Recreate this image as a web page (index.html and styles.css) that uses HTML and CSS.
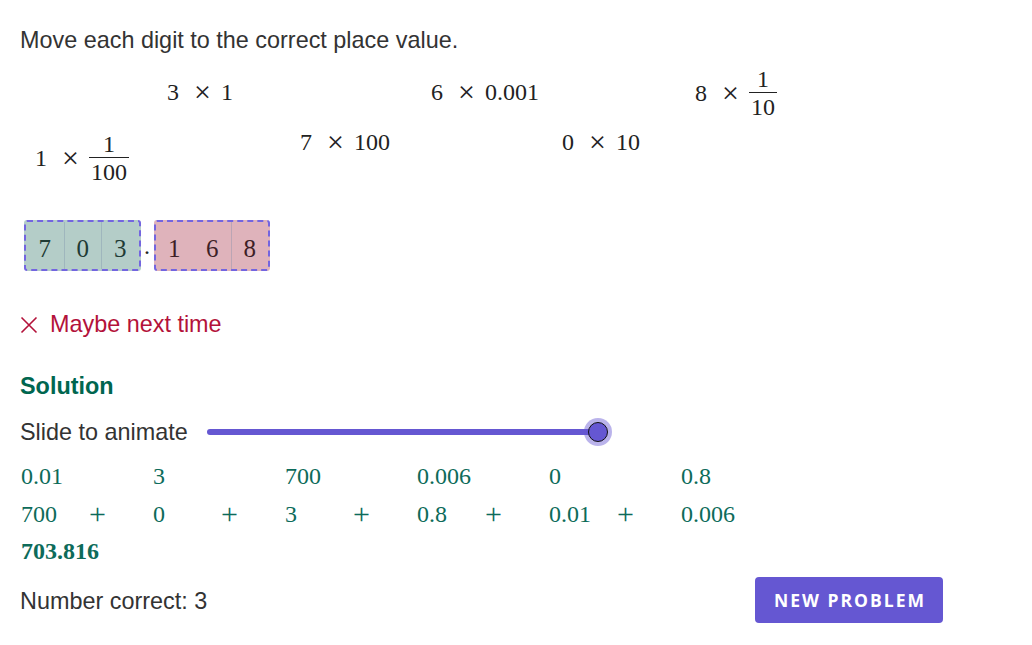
FILE: index.html
```html
<!DOCTYPE html>
<html lang="en">
<head>
<meta charset="utf-8">
<title>Place value</title>
<link rel="stylesheet" href="styles.css">
</head>
<body>
<main class="app">
  <p class="prompt">Move each digit to the correct place value.</p>

  <section class="canvas">
    <div class="term t-a"><span class="num">3</span><span class="op">×</span><span class="num">1</span></div>
    <div class="term t-b"><span class="num">6</span><span class="op">×</span><span class="num">0.001</span></div>
    <div class="term t-c"><span class="num">8</span><span class="op">×</span><span class="frac"><span class="fn">1</span><span class="fd">10</span></span></div>
    <div class="term t-d"><span class="num">1</span><span class="op">×</span><span class="frac"><span class="fn">1</span><span class="fd">100</span></span></div>
    <div class="term t-e"><span class="num">7</span><span class="op">×</span><span class="num">100</span></div>
    <div class="term t-f"><span class="num">0</span><span class="op">×</span><span class="num">10</span></div>

    <div class="pv-row">
      <div class="pv-group whole">
        <span class="cell">7</span><span class="cell">0</span><span class="cell">3</span>
      </div>
      <span class="point">.</span>
      <div class="pv-group frac-part">
        <span class="cell">1</span><span class="cell">6</span><span class="cell">8</span>
      </div>
    </div>
  </section>

  <p class="feedback">
    <svg class="x-icon" width="18" height="18" viewBox="0 0 18 18" aria-hidden="true">
      <path d="M1.5 1.5 L16.5 16.5 M16.5 1.5 L1.5 16.5" stroke="currentColor" stroke-width="1.6" fill="none"/>
    </svg>
    <span>Maybe next time</span>
  </p>

  <h2 class="solution-title">Solution</h2>

  <div class="slider-row">
    <span class="slide-label">Slide to animate</span>
    <div class="slider">
      <div class="track"></div>
      <div class="knob"></div>
    </div>
  </div>

  <div class="sol-row first">
    <span class="sol-cell">0.01</span>
    <span class="sol-cell">3</span>
    <span class="sol-cell">700</span>
    <span class="sol-cell">0.006</span>
    <span class="sol-cell">0</span>
    <span class="sol-cell">0.8</span>
  </div>
  <div class="sol-row">
    <span class="sol-cell"><span class="sv">700</span><span class="plus">+</span></span>
    <span class="sol-cell"><span class="sv">0</span><span class="plus">+</span></span>
    <span class="sol-cell"><span class="sv">3</span><span class="plus">+</span></span>
    <span class="sol-cell"><span class="sv">0.8</span><span class="plus">+</span></span>
    <span class="sol-cell"><span class="sv">0.01</span><span class="plus">+</span></span>
    <span class="sol-cell"><span class="sv">0.006</span></span>
  </div>
  <div class="sol-total">703.816</div>

  <div class="footer">
    <span class="score">Number correct: 3</span>
    <button class="new-btn" type="button">NEW PROBLEM</button>
  </div>
</main>
</body>
</html>
```

FILE: styles.css
```css
* { box-sizing: border-box; }

html, body {
  margin: 0;
  padding: 0;
  background: #ffffff;
}

body {
  font-family: "Liberation Sans", Arial, sans-serif;
  color: #333333;
}

.app {
  width: 943px;
  padding: 27px 0 0 20px;
}

.prompt {
  margin: 0;
  font-size: 23.4px;
  line-height: 26px;
}

.canvas {
  position: relative;
  margin-top: 7px;
  height: 211px;
  padding: 160px 0 0 4px;
}

.term {
  position: absolute;
  display: flex;
  align-items: center;
  font-family: "Liberation Serif", "Times New Roman", serif;
  font-size: 24px;
  line-height: 24px;
  color: #222222;
}

.op {
  font-size: 30px;
  line-height: 24px;
  margin: 0 10px 0 15px;
}

.frac {
  display: inline-flex;
  flex-direction: column;
  align-items: center;
}

.fn {
  display: block;
  margin-bottom: 1px;
}

.fd {
  display: block;
  border-top: 1.3px solid #222222;
  padding: 2px 2px 0;
}

.t-a { left: 147px; top: 20px; }
.t-b { left: 411px; top: 20px; }
.t-c { left: 675px; top: 7px; }
.t-d { left: 15px; top: 72px; }
.t-e { left: 280px; top: 70px; }
.t-f { left: 542px; top: 70px; }

.pv-row {
  display: flex;
  align-items: flex-end;
}

.pv-group {
  display: flex;
  height: 51px;
  border: 2px dashed #7365e0;
  border-radius: 3px;
}

.whole { background: #b4cdc8; color: #1f3b35; }
.frac-part { background: #dfb3bb; color: #3e1f27; }

.cell {
  width: 37.5px;
  display: flex;
  align-items: center;
  justify-content: center;
  padding-top: 6px;
  font-family: "Liberation Serif", "Times New Roman", serif;
  font-size: 25px;
  border-left: 1px solid rgba(120, 140, 170, 0.35);
}

.cell:first-child { border-left: none; }
.frac-part .cell:nth-child(2) { border-left-color: transparent; }

.point {
  width: 13px;
  text-align: center;
  font-family: "Liberation Serif", "Times New Roman", serif;
  font-size: 24px;
  line-height: 1;
  padding-bottom: 13px;
  color: #222222;
}

/* feedback */
.feedback {
  margin: 40px 0 0;
  display: flex;
  align-items: center;
  gap: 12px;
  font-size: 23.4px;
  line-height: 26px;
  color: #b3123a;
}

.x-icon {
  display: block;
  margin-top: 1px;
}

.solution-title {
  margin: 36px 0 0;
  font-size: 23.4px;
  line-height: 26px;
  font-weight: 700;
  color: #00664f;
}

.slider-row {
  margin-top: 18px;
  height: 30px;
  display: flex;
  align-items: center;
  font-size: 23.4px;
}

.slide-label {
  width: 187px;
  line-height: 26px;
}

.slider {
  position: relative;
  width: 391px;
  height: 30px;
  display: flex;
  align-items: center;
}

.track {
  width: 100%;
  height: 6px;
  border-radius: 3px;
  background: #6557d2;
}

.knob {
  position: absolute;
  right: -14px;
  top: 1px;
  width: 28px;
  height: 28px;
  border-radius: 50%;
  background: rgba(101, 87, 210, 0.45);
  display: flex;
  align-items: center;
  justify-content: center;
}

.knob::after {
  content: "";
  width: 20px;
  height: 20px;
  border-radius: 50%;
  background: #6557d2;
  border: 1.5px solid #111111;
  box-sizing: border-box;
}

/* solution rows */
.sol-row {
  display: flex;
  height: 38px;
  line-height: 38px;
  padding-left: 1px;
  font-family: "Liberation Serif", "Times New Roman", serif;
  font-size: 24px;
  color: #0d6b5a;
}

.sol-row.first { margin-top: 10px; }

.sol-cell {
  width: 132px;
  height: 38px;
  display: flex;
  align-items: center;
}

.sv { width: 68px; }

.plus {
  width: 16px;
  font-size: 30px;
  line-height: 38px;
  text-align: center;
}

.sol-total {
  height: 36px;
  line-height: 36px;
  padding-left: 1px;
  font-family: "Liberation Serif", "Times New Roman", serif;
  font-size: 24px;
  font-weight: 700;
  color: #0d6b5a;
}

.footer {
  margin-top: 8px;
  display: flex;
  align-items: center;
  justify-content: space-between;
}

.score {
  font-size: 23.4px;
  line-height: 26px;
  padding-top: 2px;
}

.new-btn {
  width: 188px;
  height: 46px;
  border: none;
  border-radius: 4px;
  background: #6557d2;
  color: #ffffff;
  font-family: "Open Sans", "Noto Sans", sans-serif;
  font-size: 17.5px;
  font-weight: 700;
  letter-spacing: 2px;
  padding: 0 0 0 2px;
  cursor: pointer;
}
```
